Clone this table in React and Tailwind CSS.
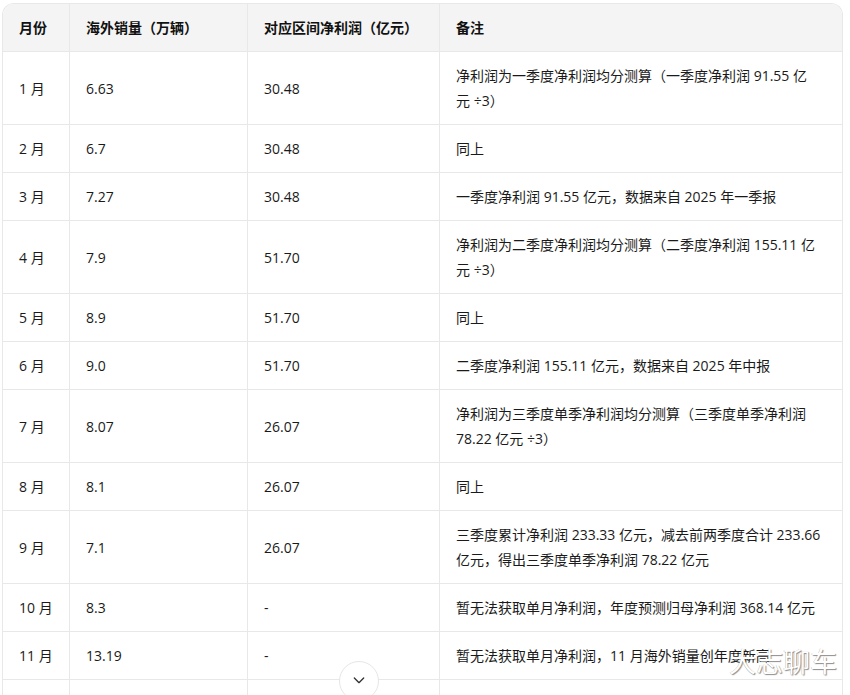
import React from "react";

const rows = [
  ["1 月", "6.63", "30.48", ["净利润为一季度净利润均分测算（一季度净利润 91.55 亿", "元 ÷3）"]],
  ["2 月", "6.7", "30.48", ["同上"]],
  ["3 月", "7.27", "30.48", ["一季度净利润 91.55 亿元，数据来自 2025 年一季报"]],
  ["4 月", "7.9", "51.70", ["净利润为二季度净利润均分测算（二季度净利润 155.11 亿", "元 ÷3）"]],
  ["5 月", "8.9", "51.70", ["同上"]],
  ["6 月", "9.0", "51.70", ["二季度净利润 155.11 亿元，数据来自 2025 年中报"]],
  ["7 月", "8.07", "26.07", ["净利润为三季度单季净利润均分测算（三季度单季净利润", "78.22 亿元 ÷3）"]],
  ["8 月", "8.1", "26.07", ["同上"]],
  ["9 月", "7.1", "26.07", ["三季度累计净利润 233.33 亿元，减去前两季度合计 233.66", "亿元，得出三季度单季净利润 78.22 亿元"]],
  ["10 月", "8.3", "-", ["暂无法获取单月净利润，年度预测归母净利润 368.14 亿元"]],
  ["11 月", "13.19", "-", ["暂无法获取单月净利润，11 月海外销量创年度新高"]],
  ["", "", "", [""]],
];

const cell = "flex flex-col justify-center px-4 py-[11px] leading-[25px] border-b border-[#e8e8e8]";

export default function App() {
  return (
    <div
      className="relative w-[850px] h-[695px] overflow-hidden bg-white text-[14px] text-[#1a1a1a]"
      style={{ fontFamily: '"Open Sans", "Noto Sans CJK SC", sans-serif' }}
    >
      <div className="ml-[2px] mt-[3px] w-[841px] border-l border-r border-t border-[#e8e8e8] rounded-t-[12px] overflow-hidden">
        <div className="grid grid-cols-[67px_178px_192px_1fr]">
          {["月份", "海外销量（万辆）", "对应区间净利润（亿元）", "备注"].map((h, i) => (
            <div
              key={h}
              className={`${cell} bg-[#f4f4f4] font-bold text-[#111] whitespace-nowrap ${i < 3 ? "border-r" : ""}`}
            >
              {h}
            </div>
          ))}
          {rows.map((r, ri) => (
            <React.Fragment key={ri}>
              <div className={`${cell} border-r whitespace-nowrap`}>{r[0] || "\u00a0"}</div>
              <div className={`${cell} border-r`}>{r[1] || "\u00a0"}</div>
              <div className={`${cell} border-r`}>{r[2] || "\u00a0"}</div>
              <div className={cell}>
                {r[3].map((l, li) => (
                  <div key={li} className="whitespace-nowrap">{l || "\u00a0"}</div>
                ))}
              </div>
            </React.Fragment>
          ))}
        </div>
      </div>

      <div className="absolute left-[339px] top-[661px] w-[40px] h-[40px] rounded-full bg-white border border-[#e6e6e6] flex items-center justify-center">
        <svg width="16" height="16" viewBox="0 0 24 24" fill="none" stroke="#333" strokeWidth="2" strokeLinecap="round" strokeLinejoin="round" className="mt-[-2px]">
          <path d="m5 9 7 7 7-7" />
        </svg>
      </div>

      <div
        className="absolute left-[729px] top-[641px] text-[27px] leading-[40px] text-white"
        style={{
          fontFamily: '"Noto Sans CJK SC", sans-serif',
          textShadow: "1px 1px 1px rgba(0,0,0,0.45), -0.5px -0.5px 0.5px rgba(0,0,0,0.25)",
        }}
      >
        大志聊车
      </div>
    </div>
  );
}
